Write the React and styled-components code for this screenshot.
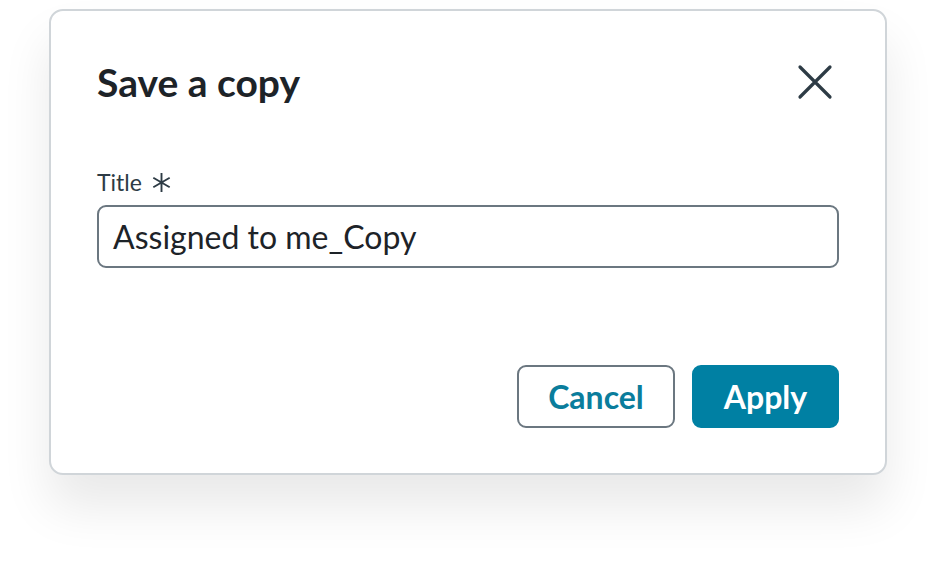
import React from "react";
import styled, { createGlobalStyle } from "styled-components";

const Global = createGlobalStyle`
  html, body { margin: 0; padding: 0; background: #ffffff; }
  body { font-family: Lato, "Noto Sans", sans-serif; }
  * { box-sizing: border-box; }
`;

const Page = styled.div`
  width: 936px;
  height: 564px;
  padding: 9px 0 0 49px;
`;

const Dialog = styled.div`
  width: 838px;
  height: 466px;
  background: #ffffff;
  border: 2px solid #d0d5d9;
  border-radius: 14px;
  box-shadow: 0 32px 50px rgba(0, 0, 0, 0.09);
  display: flex;
  flex-direction: column;
  padding: 46px 46px 0 46px;
`;

const Header = styled.div`
  display: flex;
  align-items: center;
  justify-content: space-between;
  height: 50px;
`;

const Title = styled.h2`
  margin: 0;
  font-size: 39px;
  font-weight: 700;
  color: #1d2328;
  line-height: 1;
`;

const CloseButton = styled.button`
  width: 40px;
  height: 40px;
  border: 0;
  background: transparent;
  padding: 0;
  margin-right: 4px;
  display: flex;
  align-items: center;
  justify-content: center;
  cursor: pointer;
`;

const Field = styled.div`
  margin-top: 61px;
  display: flex;
  flex-direction: column;
  gap: 9px;
`;

const Label = styled.label`
  font-size: 23px;
  line-height: 28px;
  color: #2d3b45;
  display: flex;
  align-items: center;
  gap: 9px;
`;

const Input = styled.div`
  height: 63px;
  border: 2px solid #6b7780;
  border-radius: 9px;
  padding: 0 14px;
  display: flex;
  align-items: center;
  font-size: 32px;
  color: #1d2328;
`;

const Footer = styled.div`
  margin-top: 97px;
  display: flex;
  justify-content: flex-end;
  gap: 17px;
`;

const Button = styled.button`
  height: 63px;
  padding: 0;
  border-radius: 9px;
  font-family: Lato, "Noto Sans", sans-serif;
  font-size: 32px;
  font-weight: 700;
  cursor: pointer;
  border: 2px solid ${(p) => (p.$primary ? "#0080a3" : "#6b7780")};
  background: ${(p) => (p.$primary ? "#0080a3" : "#ffffff")};
  color: ${(p) => (p.$primary ? "#ffffff" : "#0a7d9c")};
  width: ${(p) => p.$w}px;
`;

export default function App() {
  return (
    <>
      <Global />
      <Page>
        <Dialog>
          <Header>
            <Title>Save a copy</Title>
            <CloseButton aria-label="Close">
              <svg width="36" height="36" viewBox="0 0 36 36">
                <path
                  d="M3 3 L33 33 M33 3 L3 33"
                  stroke="#2d3b45"
                  strokeWidth="3.2"
                  strokeLinecap="round"
                  fill="none"
                />
              </svg>
            </CloseButton>
          </Header>
          <Field>
            <Label>
              Title
              <svg width="21" height="21" viewBox="0 0 20 20">
                <path
                  d="M10 1 V19 M2.2 5.5 L17.8 14.5 M17.8 5.5 L2.2 14.5"
                  stroke="#2d3b45"
                  strokeWidth="1.8"
                  fill="none"
                />
              </svg>
            </Label>
            <Input>Assigned to me_Copy</Input>
          </Field>
          <Footer>
            <Button $w={158}>Cancel</Button>
            <Button $primary $w={147}>Apply</Button>
          </Footer>
        </Dialog>
      </Page>
    </>
  );
}
